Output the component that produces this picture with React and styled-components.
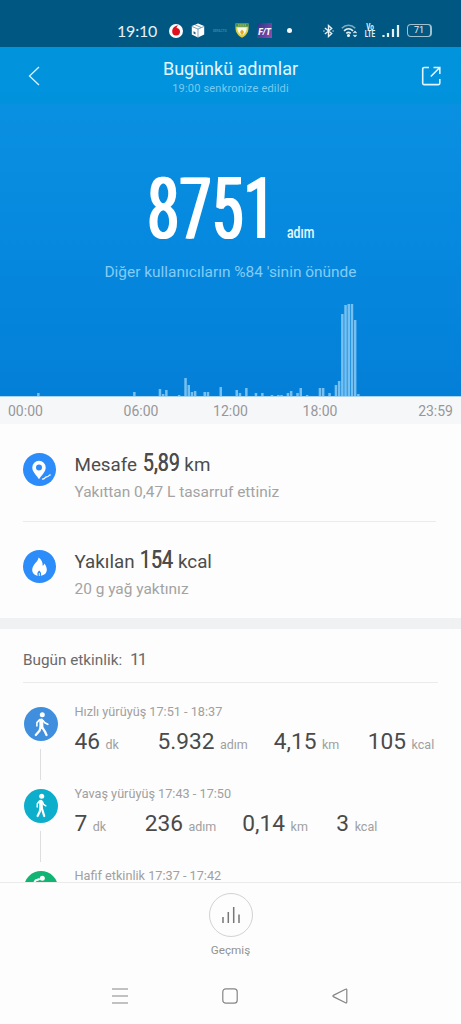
import React from 'react';
import styled, { createGlobalStyle } from 'styled-components';

const GlobalStyle = createGlobalStyle`
  * {
    box-sizing: border-box;
  }

  body {
    margin: 0;
    background: #fdfdfd;
    font-family: Roboto, "Liberation Sans", sans-serif;
  }
`;

// [ten minute slot of the day, bar height]
const steps = [
  [11, 3], [41, 4], [49, 7], [50, 2], [51, 6], [55, 1], [57, 18], [58, 11],
  [59, 4], [60, 5], [63, 4], [64, 4], [68, 9], [73, 6], [74, 3], [76, 8],
  [79, 3], [81, 3], [84, 1], [86, 1], [87, 1], [89, 3], [90, 5], [92, 3],
  [93, 8], [95, 1], [99, 8], [100, 8], [102, 3], [104, 11], [105, 15],
  [106, 82], [107, 91], [108, 92], [109, 92], [110, 76], [111, 2],
];

const activities = [
  { name: 'Hızlı yürüyüş 17:51 - 18:37', kind: 'fast', color: '#3f8fde', values: ['46', '5.932', '4,15', '105'] },
  { name: 'Yavaş yürüyüş 17:43 - 17:50', kind: 'slow', color: '#0caecb', values: ['7', '236', '0,14', '3'] },
  { name: 'Hafif etkinlik 17:37 - 17:42', kind: 'light', color: '#12b474', values: [] },
];

const units = ['dk', 'adım', 'km', 'kcal'];

const StatusIcons = () => (
  <>
    <Clock>19:10</Clock>
    <Notifications>
      <svg width="14" height="14" viewBox="0 0 14 14">
        <circle cx="7" cy="7" r="7" fill="#fff" />
        <path d="M9.5 1.3C6 1.5 3.2 4 3.2 7.5a3.9 3.9 0 0 0 7.8 0C11 5.2 9.4 4.2 7.6 3.9 7.7 2.7 8.5 1.8 9.5 1.3Z" fill="#e01020" />
      </svg>
      <svg width="14" height="15" viewBox="0 0 14 15">
        <path d="M7 .5 13.2 3v8.5L7 14.5.8 11.5V3Z" fill="#fff" />
        <path d="M1 3.5 7 6l6-2.5M7 6v8M4 1.8l6 2.6" fill="none" stroke="#27658c" strokeWidth=".6" />
        <path d="M2.5 8.2v2.3l2 .9V9.200Z" fill="#27658c" />
      </svg>
      <Faint>DEFACTO</Faint>
      <svg width="14" height="15" viewBox="0 0 14 15">
        <path d="M.5.5h13V5c0 5-3 8-6.5 9.7C3.5 13 .5 10 .5 5Z" fill="#d9cf3c" />
        <path d="M.5.5h13v3.2H.5Z" fill="#3f8f63" />
        <path d="M2.2 4.5h9.600c0 4-2 6.500-4.800 8-2.800-1.500-4.800-4-4.800-8Z" fill="#f6f8ea" />
        <path d="M7 6.500 9 9l-2 3.500L5 9Z" fill="#e7a91b" />
        <path d="M3 2h8" stroke="#d9cf3c" strokeDasharray="1.500 .7" />
      </svg>
      <FitBadge><span>F/T</span></FitBadge>
      <Dot />
    </Notifications>
    <System>
      <svg width="11" height="14" viewBox="0 0 12 14" fill="none" stroke="#e6f1f6" strokeWidth="1.500">
        <path d="m2 3.800 7.500 6L6 13V1l3.500 3.200-7.500 6" />
        <path d="M.5 7h1M10.500 7h1" />
      </svg>
      <svg width="17" height="15" viewBox="0 0 17 15" fill="none" stroke="#e6f1f6" strokeWidth="1.600">
        <path d="M.8 5.200c4-3.900 9.500-3.900 13.500 0" stroke="#7fa9c0" />
        <path d="M3 7.900c2.800-2.600 6.300-2.600 9 0M5.300 10.300c1.400-1.200 3-1.200 4.400 0" />
        <circle cx="7.500" cy="12.500" r=".8" fill="#e6f1f6" />
        <path d="m12.500 10 1.500-1.500 1.500 1.500M12.500 12l1.500 1.500 1.500-1.500" strokeWidth="1.200" />
      </svg>
      <Volte>
        <span>Vo</span>
        <span>LTE</span>
      </Volte>
      <svg width="18" height="14" viewBox="0 0 18 14" stroke="#e6f1f6" strokeWidth="2.200">
        <path d="M1.500 13v-2M6 13V9M11 13V5M16 13V1" />
      </svg>
      <Battery>71</Battery>
    </System>
  </>
);

const StepChart = () => (
  <svg width="461" height="93" viewBox="0 0 461 93">
    {steps.map(([slot, height]) => (
      <rect key={slot} x={1.9 + slot * 3.2} y={92 - height} width="2.500" height={height} fill="#75c0f1" />
    ))}
    <rect y="92" width="461" height="1" fill="#a9d5f3" />
  </svg>
);

const PinIcon = () => (
  <svg width="33" height="33" viewBox="0 0 33 33">
    <path
      d="M16 7.800a6.700 6.700 0 0 0-6.700 6.700c0 4.600 4.200 7.500 6.700 11.800 2.500-4.300 6.700-7.200 6.700-11.800A6.700 6.700 0 0 0 16 7.800Zm0 3.700a3 3 0 1 1 0 6 3 3 0 0 1 0-6Z"
      fill="#fff"
      fillRule="evenodd"
    />
    <path d="M19 26.200c3.500.2 2.500-2.500 4.700-2.300 2.200.2 1.500-2 4-2" fill="none" stroke="#fff" strokeWidth="1.200" />
  </svg>
);

const FlameIcon = () => (
  <svg width="33" height="33" viewBox="0 0 33 33">
    <path
      d="M15.500 7.500c.2 3.600-6.300 7.200-6.300 12.300 0 3.200 2.100 5.600 5.600 6-.9-1.900-.5-3.400 1.400-5.200 1.900 1.800 2.400 3.300 1.600 5.200 3.500-.4 6-2.600 6-6 0-2.400-1.100-4.500-2.500-6.200-.3 1.300-.8 1.900-1.600 2.200.2-3.600-1.400-6.600-4.200-8.300Z"
      fill="#fff"
    />
    <path d="M16.300 23V26" stroke="#fff" strokeWidth=".9" />
  </svg>
);

const figures = {
  fast: (
    <>
      <path d="M17.300 13.500 17.400 20" strokeWidth="4" />
      <path d="M15.700 12.600 12.900 15.600V19M19 13.500l1.800 2.200 3 1.600" strokeWidth="1.600" />
      <path d="M16.600 20.300 15.500 23.800 11.800 28M18.200 20.300 20.800 24.300 22.500 28" strokeWidth="2.300" />
    </>
  ),
  slow: (
    <>
      <path d="M16.900 12.500 17.100 18.800" strokeWidth="3.600" />
      <path d="M15.500 12 13.300 14.800 13.200 18M18.500 12.800l1 2.500 2.300 1.500" strokeWidth="1.500" />
      <path d="M16.500 19 15.800 22.500 13.600 27M17.800 19 19 23l1.200 4" strokeWidth="2.200" />
    </>
  ),
  light: (
    <path d="M15 8.200 11.500 9.500 9.800 12.500M16.500 12 15 20" strokeWidth="2" />
  ),
};

const Activity = ({ name, kind, color, values }) => (
  <ActivityRow>
    <Track>
      <Round $size="34px" $color={color}>
        <svg width="34" height="34" viewBox="0 0 34 34" fill="none" strokeLinecap="round" strokeLinejoin="round">
          <g stroke="#fff">{figures[kind]}</g>
          <circle cx={kind === 'slow' ? 17.7 : 18.3} cy={kind === 'fast' ? 7.8 : 7.2} r="2.500" fill="#fff" />
        </svg>
      </Round>
      <Line />
    </Track>
    <div>
      <ActivityName>{name}</ActivityName>
      <Stats>
        {values.map((value, index) => (
          <Stat key={units[index]}>
            {value}
            <small>{units[index]}</small>
          </Stat>
        ))}
      </Stats>
    </div>
  </ActivityRow>
);

const App = () => {
  return (
    <Screen>
      <GlobalStyle />
      <StatusBar>
        <StatusIcons />
      </StatusBar>

      <Header>
        <svg width="12" height="20" viewBox="0 0 12 20" fill="none" stroke="#d9f2ff" strokeWidth="1.300">
          <path d="M11 1 1.500 10 11 19" />
        </svg>
        <Heading>
          <h1>Bugünkü adımlar</h1>
          <p>19:00 senkronize edildi</p>
        </Heading>
        <svg width="20" height="20" viewBox="0 0 20 20" fill="none" stroke="#e2f5ff" strokeWidth="1.600">
          <path d="M8 1.500H3.200a1.500 1.500 0 0 0-1.500 1.500v14.300a1.300 1.300 0 0 0 1.300 1.300h14.500a1.300 1.300 0 0 0 1.300-1.300V13" />
          <path d="M12.500 1.500h6.300v6.500M18.500 1.700 9.800 10.500" />
        </svg>
      </Header>

      <Hero>
        <Total>
          <TotalValue>8751</TotalValue>
          <TotalUnit>adım</TotalUnit>
        </Total>
        <Rank>Diğer kullanıcıların %84 'sinin önünde</Rank>
        <StepChart />
      </Hero>

      <Axis>
        <span>00:00</span>
        <span>06:00</span>
        <span>12:00</span>
        <span>18:00</span>
        <span>23:59</span>
      </Axis>

      <Summary>
        <SummaryRow>
          <Round $size="33px" $color="#2b8cfa"><PinIcon /></Round>
          <div>
            <SummaryTitle>
              Mesafe <Narrow $width="38px">5,89</Narrow> km
            </SummaryTitle>
            <SummaryText>Yakıttan 0,47 L tasarruf ettiniz</SummaryText>
          </div>
        </SummaryRow>
        <SummaryRow>
          <Round $size="33px" $color="#2b8cfa"><FlameIcon /></Round>
          <div>
            <SummaryTitle>
              Yakılan <Narrow $width="34px">154</Narrow> kcal
            </SummaryTitle>
            <SummaryText>20 g yağ yaktınız</SummaryText>
          </div>
        </SummaryRow>
      </Summary>

      <Activities>
        <ActivitiesTitle>
          Bugün etkinlik: <b>11</b>
        </ActivitiesTitle>
        {activities.map((activity) => (
          <Activity key={activity.name} {...activity} />
        ))}
      </Activities>

      <Footer>
        <HistoryButton>
          <svg width="20" height="18" viewBox="0 0 20 18" stroke="#777" strokeWidth="1.500">
            <path d="M2 17v-6M7.300 17V6M12.700 17V1M18 17V8.500" />
          </svg>
        </HistoryButton>
        <span>Geçmiş</span>
      </Footer>

      <NavBar>
        <svg width="16" height="16" viewBox="0 0 16 16" stroke="#858585" strokeWidth="1.200">
          <path d="M0 1h16M0 8h16M0 15h16" />
        </svg>
        <svg width="16" height="16" viewBox="0 0 16 16" fill="none" stroke="#858585" strokeWidth="1.200">
          <rect x=".8" y=".8" width="14.400" height="14.400" rx="3" />
        </svg>
        <svg width="16" height="16" viewBox="0 0 16 16" fill="none" stroke="#858585" strokeWidth="1.200">
          <path d="M14.800 2v12c0 .9-.6 1.200-1.300.8L1.300 8.600c-.7-.4-.7-.8 0-1.200L13.500 1.200c.7-.4 1.300-.1 1.300.8Z" />
        </svg>
      </NavBar>
    </Screen>
  );
};

const Screen = styled.div`
  display: flex;
  flex-direction: column;
  width: 461px;
  height: 1024px;
  overflow: hidden;
  background: #fdfdfd;
`;

const StatusBar = styled.div`
  display: flex;
  align-items: center;
  flex: none;
  height: 47px;
  padding: 14px 29px 0 117px;
  background: #005782;
  color: #e6f1f6;
`;

const Clock = styled.span`
  width: 52px;
  font-family: Lato, sans-serif;
  font-size: 16px;
  letter-spacing: -0.2px;
  line-height: 18px;
`;

const Notifications = styled.div`
  display: flex;
  align-items: center;
  gap: 8px;
`;

const Faint = styled.span`
  width: 14px;
  color: #3d86aa;
  font-size: 3.2px;
  font-weight: 700;
`;

const FitBadge = styled.span`
  display: flex;
  align-items: flex-end;
  justify-content: center;
  width: 15px;
  height: 15px;
  background: linear-gradient(120deg, #27388a, #68429f 60%, #9a4bb0);
  color: #fff;
  font-size: 8.5px;
  font-style: italic;
  font-weight: 800;
  line-height: 11px;
`;

const Dot = styled.span`
  width: 5px;
  height: 5px;
  margin-left: 7px;
  border-radius: 50%;
  background: #f4fafc;
`;

const System = styled.div`
  display: flex;
  align-items: center;
  gap: 7px;
  margin-left: auto;
`;

const Volte = styled.span`
  display: flex;
  flex-direction: column;
  align-items: center;
  width: 10px;
  font-size: 8.5px;
  font-weight: 700;
  line-height: 7px;
  transform: scaleX(0.75);
`;

const Battery = styled.span`
  width: 25px;
  height: 13px;
  border: 1.5px solid #9fc0d0;
  border-right-width: 2px;
  border-radius: 4px;
  font-size: 9px;
  line-height: 11px;
  text-align: center;
`;

const Header = styled.header`
  display: flex;
  align-items: center;
  justify-content: space-between;
  flex: none;
  height: 57px;
  padding: 0 20px 0 28px;
  background: linear-gradient(#0094dc, #0192dc);
`;

const Heading = styled.div`
  padding-top: 4px;
  text-align: center;

  h1 {
    margin: 0;
    color: #e4f7ff;
    font-size: 18px;
    font-weight: 400;
    line-height: 22px;
  }

  p {
    margin: 0;
    color: #79caf0;
    font-size: 11px;
    letter-spacing: 0.2px;
    line-height: 17px;
  }
`;

const Hero = styled.div`
  display: flex;
  flex-direction: column;
  flex: none;
  height: 293px;
  background: linear-gradient(#0a90e1, #068adf 40%, #047fd8);
`;

const Total = styled.div`
  display: flex;
  align-items: baseline;
  height: 109px;
  padding: 55px 0 0 147.5px;
  white-space: nowrap;
`;

const TotalValue = styled.span`
  width: 139.5px;
  color: #fff;
  font-size: 85px;
  letter-spacing: 2.4px;
  line-height: 100px;
  text-shadow: -2.4px 0 #fff, 2.4px 0 #fff;
  transform: scaleX(0.64);
  transform-origin: left;
`;

const TotalUnit = styled.span`
  color: #e9f8ff;
  font-size: 17px;
  font-weight: 500;
  transform: scaleX(0.72);
  transform-origin: left;
`;

const Rank = styled.p`
  margin: 48px 0 0;
  height: 43px;
  color: #84ccf5;
  font-size: 15.45px;
  line-height: 22px;
  text-align: center;
`;

const Axis = styled.div`
  display: grid;
  grid-template-columns: 1fr repeat(3, 89.5px) 1fr;
  flex: none;
  height: 27px;
  padding: 0 8px;
  background: #f6f7f9;
  color: #969799;
  font-size: 14px;
  line-height: 29px;
  text-align: center;

  span:first-child {
    text-align: left;
  }

  span:last-child {
    text-align: right;
  }
`;

const Summary = styled.section`
  flex: none;
  height: 194px;
  padding: 0 25px 0 23px;
`;

const SummaryRow = styled.div`
  display: flex;
  gap: 18.5px;
  height: 97px;
  padding-top: 23px;

  & > span {
    margin-top: 6px;
  }

  & + & {
    border-top: 1px solid #ebebeb;
    padding-top: 22px;
  }
`;

const Round = styled.span`
  display: flex;
  align-items: center;
  justify-content: center;
  flex: none;
  width: ${({ $size }) => $size};
  height: ${({ $size }) => $size};
  border-radius: 50%;
  background: ${({ $color }) => $color};
`;

const SummaryTitle = styled.div`
  color: #4c4c4c;
  font-size: 18.8px;
  line-height: 32px;
  white-space: pre;
`;

const Narrow = styled.span`
  display: inline-block;
  width: ${({ $width }) => $width};
  padding-left: 1px;
  font-size: 26.5px;
  line-height: 30px;
  text-shadow: 0.5px 0 #4c4c4c;
  transform: scaleX(0.74);
  transform-origin: left;
`;

const SummaryText = styled.div`
  color: #a3a3a3;
  font-size: 15.45px;
  line-height: 22px;
`;

const Activities = styled.section`
  flex: 1;
  min-height: 0;
  overflow: hidden;
  padding: 0 23px;
  border-top: 11px solid #f0f1f2;
`;

const ActivitiesTitle = styled.div`
  height: 54px;
  border-bottom: 1px solid #ebebeb;
  color: #6a6a6a;
  font-size: 15.3px;
  line-height: 61px;

  b {
    margin-left: 4px;
    font-size: 17px;
    font-weight: 400;
    letter-spacing: -1.8px;
  }
`;

const ActivityRow = styled.div`
  display: flex;
  gap: 16.5px;
  height: 82px;
  padding-top: 20px;
`;

const Track = styled.div`
  display: flex;
  flex-direction: column;
  align-items: center;
  flex: none;
  width: 35px;
  padding-top: 4px;
`;

const Line = styled.span`
  width: 1px;
  height: 31px;
  flex: none;
  margin-top: 8px;
  background: #dedede;
`;

const ActivityName = styled.div`
  color: #a0a0a0;
  font-size: 12.7px;
  line-height: 17px;
`;

const Stats = styled.div`
  display: flex;
  padding-top: 2px;
  line-height: 40px;
  white-space: nowrap;
`;

const Stat = styled.span`
  color: #4a4a4a;
  font-size: 22.7px;

  &:nth-child(1) {
    margin-right: 38.5px;
  }

  &:nth-child(2) {
    margin-right: 26px;
  }

  &:nth-child(3) {
    margin-right: 28.5px;
  }

  small {
    margin-left: 5.5px;
    color: #a0a0a0;
    font-size: 12.5px;
  }
`;

const Footer = styled.footer`
  display: flex;
  flex-direction: column;
  align-items: center;
  flex: none;
  height: 85px;
  padding-top: 10px;
  border-top: 1px solid #ebebeb;
  color: #929292;
  font-size: 11.7px;
  line-height: 27px;
`;

const HistoryButton = styled.button`
  display: flex;
  align-items: center;
  justify-content: center;
  width: 44px;
  height: 44px;
  padding: 0;
  border: 1px solid #d2d2d2;
  border-radius: 50%;
  background: transparent;
`;

const NavBar = styled.nav`
  display: flex;
  align-items: center;
  justify-content: space-between;
  flex: none;
  height: 57px;
  padding: 0 113px 0 112px;
`;

export default App;
